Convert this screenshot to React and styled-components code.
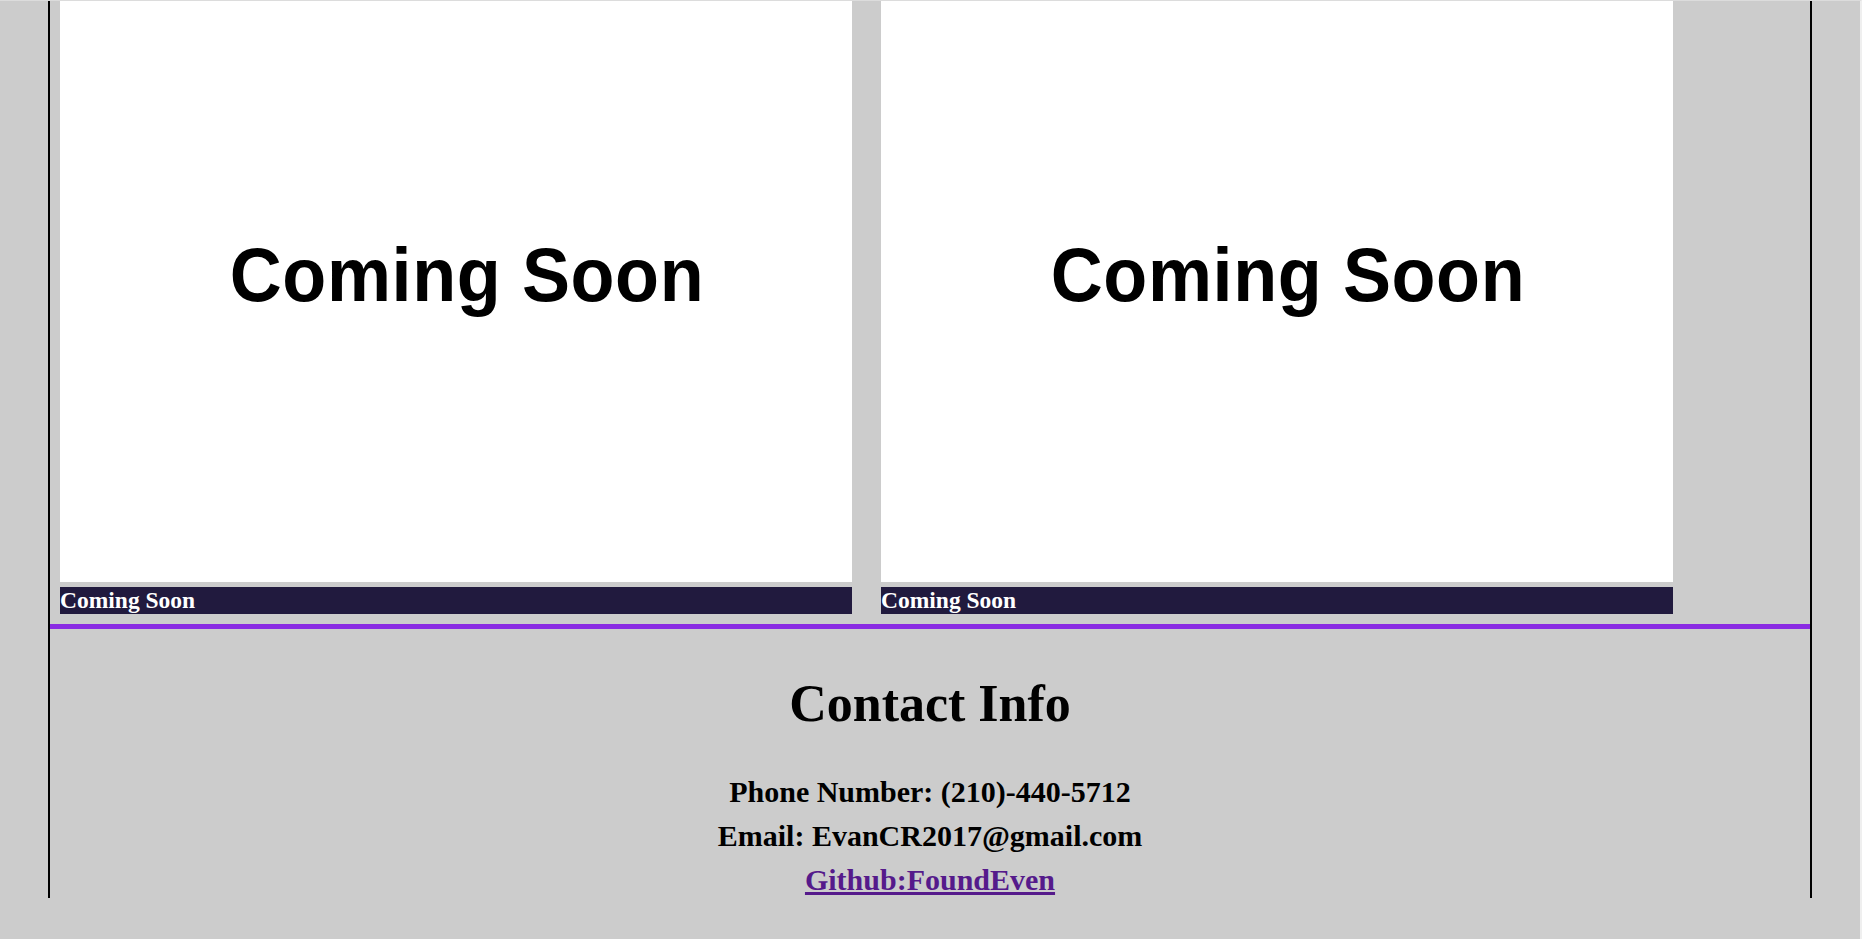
import React from "react";
import styled, { createGlobalStyle } from "styled-components";

const GlobalStyle = createGlobalStyle`
  html, body {
    margin: 0;
    padding: 0;
    background: #cccccc;
  }
  body {
    font-family: "Liberation Serif", "Times New Roman", serif;
    min-height: 939px;
  }
`;

const Page = styled.div`
  box-sizing: border-box;
  width: 1862px;
  min-height: 939px;
  border-top: 1px solid #dcdcdc;
  border-right: 2px solid #efefef;
  padding-left: 48px;
`;

const Container = styled.main`
  width: 1760px;
  border-left: 2px solid #000;
  border-right: 2px solid #000;
`;

const Projects = styled.section`
  display: flex;
  gap: 29px;
  padding: 0 0 10px 10px;
`;

const Card = styled.article`
  width: 792px;
  display: flex;
  flex-direction: column;
  gap: 5px;
`;

const Shot = styled.div`
  height: 581px;
  background: #ffffff;
  box-sizing: border-box;
  padding: 239px 0 0 22px;
  display: flex;
  justify-content: center;
  align-items: flex-start;
`;

const ShotText = styled.span`
  display: inline-block;
  font-family: "Liberation Sans", Arial, sans-serif;
  font-weight: 700;
  font-size: 72px;
  line-height: 72px;
  letter-spacing: 0.6px;
  color: #000;
  white-space: nowrap;
  transform: scaleY(1.06);
  transform-origin: 50% 85%;
`;

const Caption = styled.div`
  height: 27px;
  background: #211a3e;
  color: #ffffff;
  font-weight: 700;
  font-size: 23.5px;
  line-height: 27px;
  white-space: nowrap;
`;

const Contact = styled.section`
  border-top: 5px solid #8a2be2;
  padding: 44px 0 0;
  text-align: center;
  color: #000;
`;

const Heading = styled.h2`
  margin: 0;
  font-size: 52px;
  line-height: 61px;
  font-weight: 700;
`;

const Lines = styled.div`
  margin-top: 40px;
  display: flex;
  flex-direction: column;
  gap: 8px;
`;

const Line = styled.p`
  margin: 0;
  font-size: 30px;
  line-height: 36px;
  font-weight: 700;
`;

const Link = styled.a`
  color: #551a8b;
  text-decoration: underline;
`;

const projects = [{ id: 1, title: "Coming Soon" }, { id: 2, title: "Coming Soon" }];

export default function App() {
  return (
    <>
      <GlobalStyle />
      <Page>
        <Container>
          <Projects>
            {projects.map((p) => (
              <Card key={p.id}>
                <Shot>
                  <ShotText>Coming Soon</ShotText>
                </Shot>
                <Caption>{p.title}</Caption>
              </Card>
            ))}
          </Projects>
          <Contact>
            <Heading>Contact Info</Heading>
            <Lines>
              <Line>Phone Number: (210)-440-5712</Line>
              <Line>Email: EvanCR2017@gmail.com</Line>
              <Line>
                <Link href="#github">Github:FoundEven</Link>
              </Line>
            </Lines>
          </Contact>
        </Container>
      </Page>
    </>
  );
}
